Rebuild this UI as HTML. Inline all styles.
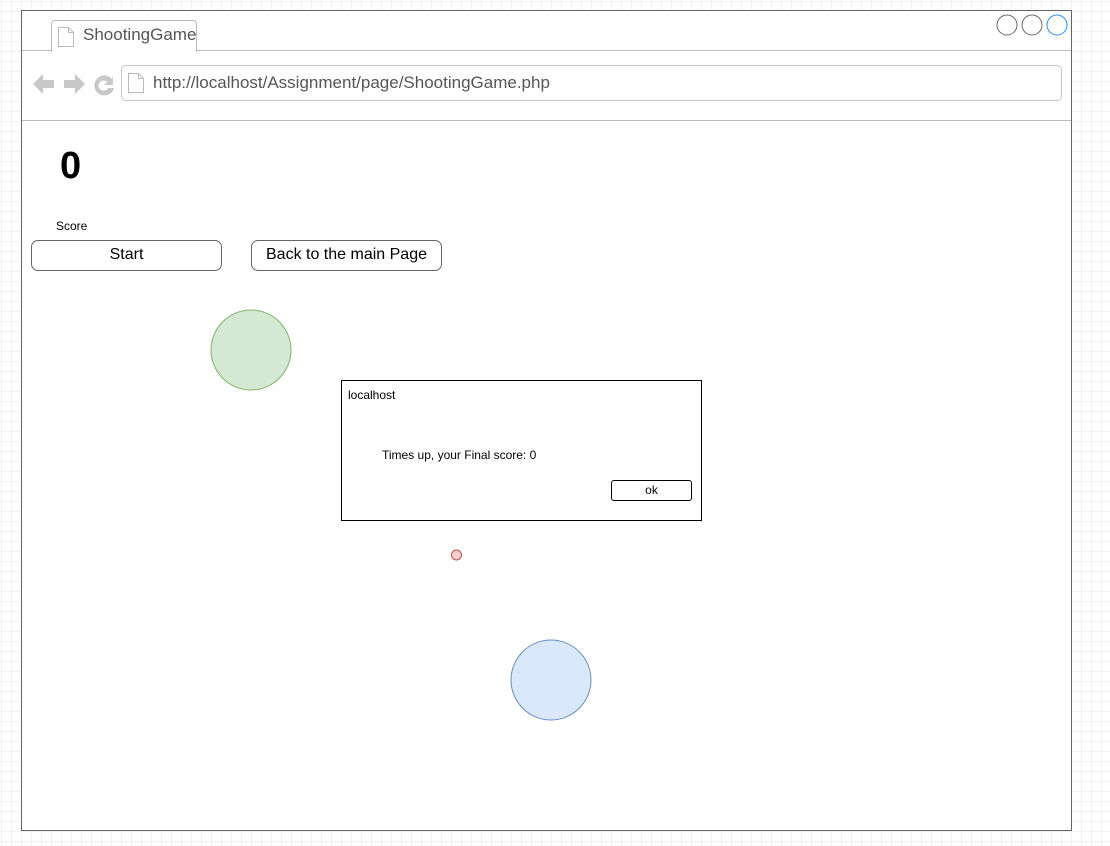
<!DOCTYPE html>
<html><head><style>
body{margin:0;width:1110px;height:846px;overflow:hidden;position:relative;font-family:"Liberation Sans",Arial,sans-serif;
background-color:#fff;background-image:linear-gradient(#f1f1f1 1px,transparent 1px),linear-gradient(90deg,#f1f1f1 1px,transparent 1px);background-size:10px 10px;background-position:1px 1px}
.a{position:absolute}
</style></head><body>
<div class="a" style="left:21px;top:10px;width:1049px;height:819px;border:1px solid #666;background:#fff"></div>
<div class="a" style="left:22px;top:50px;width:1049px;border-top:1px solid #bbb"></div>
<div class="a" style="left:22px;top:120px;width:1049px;border-top:1px solid #bbb"></div>
<div class="a" style="left:51px;top:20px;width:144px;height:31px;border:1px solid #bbb;border-bottom:none;border-radius:4px 4px 0 0;background:#fff"></div>
<svg class="a" style="left:57px;top:26px" width="18" height="22"><path d="M1.5 1.5h10l5 5v14h-15z M11.5 1.5v5h5" fill="#fff" stroke="#bbb"/></svg>
<div class="a" style="left:83px;top:25px;font-size:17px;color:#555">ShootingGame</div>
<svg class="a" style="left:995px;top:14px" width="74" height="24"><circle cx="12" cy="11" r="10" fill="none" stroke="#666"/><circle cx="37" cy="11" r="10" fill="none" stroke="#666"/><circle cx="62" cy="11" r="10" fill="none" stroke="#1e90ff"/></svg>
<svg class="a" style="left:31px;top:70px" width="86" height="28"><path d="M2 14l10-10v6h11v8h-11v6z" fill="#c8c8c8"/><path d="M54 14l-10-10v6h-11v8h11v6z" fill="#c8c8c8"/><path d="M81 9a10 10 0 1 0 2 9h-6a5 5 0 1 1-1-6l-3 3h9v-9z" fill="#c8c8c8"/></svg>
<div class="a" style="left:121px;top:65px;width:939px;height:34px;border:1px solid #c8c8c8;border-radius:5px"></div>
<svg class="a" style="left:127px;top:72px" width="18" height="22"><path d="M1.5 1.5h10l5 5v14h-15z M11.5 1.5v5h5" fill="#fff" stroke="#bbb"/></svg>
<div class="a" style="left:153px;top:73px;font-size:17px;color:#555">http://localhost/Assignment/page/ShootingGame.php</div>
<div class="a" style="left:60px;top:145px;font-size:38px;font-weight:bold">0</div>
<div class="a" style="left:56px;top:219px;font-size:12px">Score</div>
<div class="a" style="left:31px;top:240px;width:189px;height:29px;border:1px solid #666;border-radius:7px;text-align:center;line-height:28px;font-size:16px">Start</div>
<div class="a" style="left:251px;top:240px;width:189px;height:29px;border:1px solid #666;border-radius:7px;text-align:center;line-height:28px;font-size:16px">Back to the main Page</div>
<svg class="a" style="left:0;top:0" width="1110" height="846"><circle cx="251" cy="350" r="40" fill="#d5e8d4" stroke="#82b366"/><circle cx="551" cy="680" r="40" fill="#dae8fc" stroke="#6c8ebf"/><circle cx="456.5" cy="555" r="5" fill="#f8cecc" stroke="#b85450"/></svg>
<div class="a" style="left:341px;top:380px;width:359px;height:139px;border:1px solid #000;background:#fff"></div>
<div class="a" style="left:348px;top:388px;font-size:12px">localhost</div>
<div class="a" style="left:382px;top:448px;font-size:12px">Times up, your Final score: 0</div>
<div class="a" style="left:611px;top:480px;width:79px;height:19px;border:1px solid #000;border-radius:3px;text-align:center;line-height:19px;font-size:12px">ok</div>
</body></html>
